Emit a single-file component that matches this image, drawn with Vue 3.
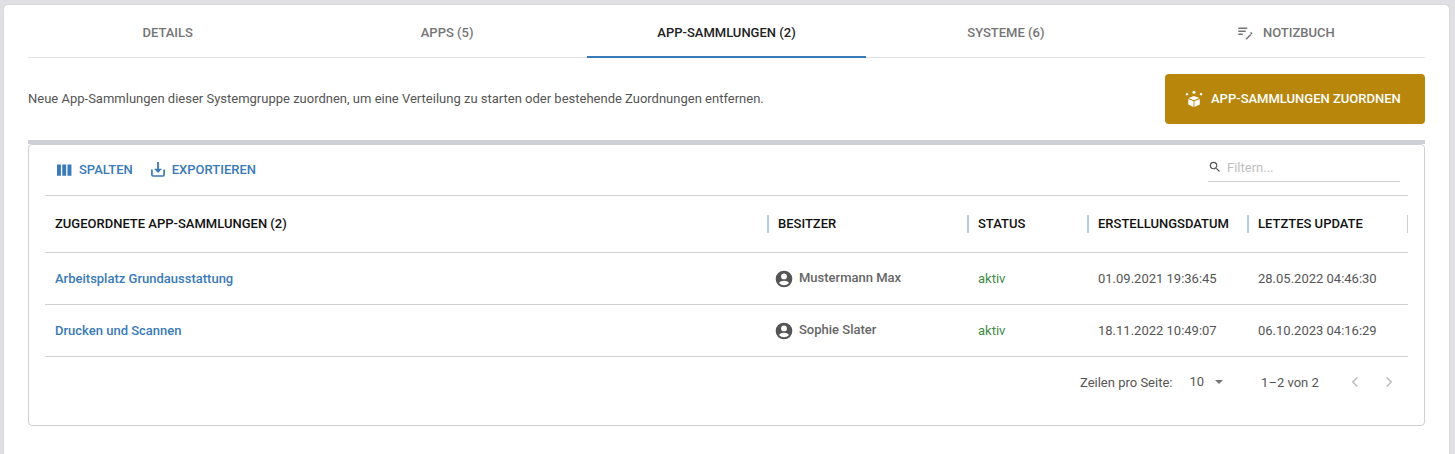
<script setup>
const tabs = [
  { label: 'DETAILS' },
  { label: 'APPS (5)' },
  { label: 'APP-SAMMLUNGEN (2)', active: true },
  { label: 'SYSTEME (6)' },
  { label: 'NOTIZBUCH', icon: true }
]
const rows = [
  { name: 'Arbeitsplatz Grundausstattung', owner: 'Mustermann Max', status: 'aktiv', created: '01.09.2021 19:36:45', updated: '28.05.2022 04:46:30' },
  { name: 'Drucken und Scannen', owner: 'Sophie Slater', status: 'aktiv', created: '18.11.2022 10:49:07', updated: '06.10.2023 04:16:29' }
]
</script>

<template>
  <div class="page">
    <main class="card">
      <nav class="tabs">
        <div v-for="t in tabs" :key="t.label" class="tab" :class="{ active: t.active }">
          <svg v-if="t.icon" class="tab-icon" viewBox="0 0 24 24"><path fill="currentColor" d="M3 10h10v2H3zm0-4h12v2H3zm0 8h6v2H3zm10 6.500V22h1.500l6-6-1.500-1.500zM21.700 13.300l-1-1a.8.8 0 0 0-1.100 0l-.9.9 2.100 2.100.9-.9a.8.8 0 0 0 0-1.100z"/></svg>
          <span>{{ t.label }}</span>
        </div>
      </nav>

      <section class="intro">
        <p>Neue App-Sammlungen dieser Systemgruppe zuordnen, um eine Verteilung zu starten oder bestehende Zuordnungen entfernen.</p>
        <button class="assign">
          <svg class="box" viewBox="0 0 20 20"><path fill="#fff" d="M10 6.600l6 2.400-6 2.400L4 9zM3.600 10l5.900 2.400v6.400l-5.900-2.600zM16.400 10l-5.900 2.400v6.400l5.900-2.600z"/><circle fill="#fff" cx="10" cy="2.600" r="1.700"/><circle fill="#fff" cx="2.200" cy="4.600" r="1.300"/><circle fill="#fff" cx="17.800" cy="4.600" r="1.300"/></svg>
          <span>APP-SAMMLUNGEN ZUORDNEN</span>
        </button>
      </section>

      <div class="band"></div>
      <section class="panel">
        <div class="toolbar">
          <div class="actions">
            <span class="action">
              <svg class="ic" viewBox="0 0 16 12"><path fill="currentColor" d="M0 0h4.200v12H0zM5.600 0h4.200v12H5.600zM11.200 0H15.400v12h-4.200z"/></svg>
              SPALTEN
            </span>
            <span class="action">
              <svg class="ic ic2" viewBox="0 0 14 15"><path fill="none" stroke="currentColor" stroke-width="1.700" d="M.9 7.500v5.300c0 .7.500 1.200 1.200 1.200h9.800c.7 0 1.200-.5 1.200-1.200V7.500"/><path fill="currentColor" d="M6.100 0h1.800v6.800H11l-4 4.200-4-4.200h3.100z"/></svg>
              EXPORTIEREN
            </span>
          </div>
          <label class="filter">
            <svg class="search" viewBox="0 0 24 24"><path fill="#555" d="M15.500 14h-.79l-.28-.27A6.471 6.471 0 0 0 16 9.500 6.500 6.500 0 1 0 9.500 16c1.610 0 3.090-.59 4.230-1.570l.27.28v.79l5 4.990L20.490 19l-4.990-5zm-6 0C7.010 14 5 11.990 5 9.500S7.010 5 9.500 5 14 7.010 14 9.500 11.990 14 9.500 14z"/></svg>
            <span>Filtern...</span>
          </label>
        </div>

        <div class="grid head">
          <div class="th first">ZUGEORDNETE APP-SAMMLUNGEN (2)</div>
          <div class="th">BESITZER</div>
          <div class="th">STATUS</div>
          <div class="th">ERSTELLUNGSDATUM</div>
          <div class="th last">LETZTES UPDATE</div>
        </div>
        <div v-for="r in rows" :key="r.name" class="grid row">
          <a class="name">{{ r.name }}</a>
          <div class="owner">
            <svg class="avatar" viewBox="0 0 24 24"><path fill="#555" d="M12 2a10 10 0 1 0 0 20 10 10 0 0 0 0-20zm0 3.400a3.500 3.500 0 1 1 0 7 3.500 3.500 0 0 1 0-7zm0 14.200a7.700 7.700 0 0 1-6-2.900c.9-1.700 3.700-2.700 6-2.700s5.100 1 6 2.700a7.700 7.700 0 0 1-6 2.900z"/></svg>
            <span>{{ r.owner }}</span>
          </div>
          <div class="status">{{ r.status }}</div>
          <div class="date">{{ r.created }}</div>
          <div class="date">{{ r.updated }}</div>
        </div>

        <footer class="pager">
          <span>Zeilen pro Seite:</span>
          <span class="size">10</span>
          <i class="caret"></i>
          <span class="range">1–2 von 2</span>
          <svg class="chev" viewBox="0 0 24 24"><path fill="none" stroke="#bdbdbd" stroke-width="2" d="M15 6l-6 6 6 6"/></svg>
          <svg class="chev next" viewBox="0 0 24 24"><path fill="none" stroke="#bdbdbd" stroke-width="2" d="M9 6l6 6-6 6"/></svg>
        </footer>
      </section>
    </main>
  </div>
</template>

<style>
html, body { margin: 0; background: #dfdfe4; }
</style>

<style scoped>
.page {
  box-sizing: border-box;
  height: 454px;
  padding: 5px 6px 0 4px;
  overflow: hidden;
  font-family: Roboto, "Liberation Sans", sans-serif;
  color: #555;
}
.card {
  box-sizing: border-box;
  height: 449px;
  padding: 0 24px;
  background: #fff;
  border-radius: 4px 4px 0 0;
  box-shadow: 0 0 1px rgba(0, 0, 0, 0.25);
}
.tabs {
  display: grid;
  grid-template-columns: repeat(5, 1fr);
  height: 53px;
  box-sizing: border-box;
  border-bottom: 1px solid #e2e2e6;
}
.tab {
  display: flex;
  align-items: center;
  justify-content: center;
  gap: 9px;
  height: 53px;
  box-sizing: border-box;
  padding-top: 1px;
  font-size: 13px;
  font-weight: 500;
  color: #757575;
}
.tab.active {
  color: #222;
  box-shadow: inset 0 -2px 0 #3a7ab8;
}
.tab-icon { width: 18px; height: 18px; }
.intro {
  display: flex;
  justify-content: space-between;
  align-items: center;
  height: 50px;
  margin-top: 16px;
}
.intro p {
  margin: 0 0 2px;
  font-size: 13px;
  color: #555;
}
.assign {
  display: flex;
  align-items: center;
  gap: 8px;
  width: 260px;
  height: 50px;
  padding: 0 0 0 20px;
  border: 0;
  border-radius: 4px;
  background: #b8860b;
  color: #fff;
  font: 500 13px Roboto, sans-serif;
}
.assign span { margin-bottom: 2px; }
.box { width: 18px; height: 18px; }
.band {
  height: 4px;
  margin-top: 16px;
  background: #cdd0d6;
}
.panel {
  box-sizing: border-box;
  height: 282px;
  padding: 0 16px;
  border: 1px solid #cfcfd4;
  border-radius: 4px;
}
.toolbar {
  display: flex;
  justify-content: space-between;
  box-sizing: border-box;
  height: 51px;
  border-bottom: 1px solid #cfd0d4;
}
.actions {
  display: flex;
  align-items: center;
  gap: 18px;
  padding: 0 0 1px 12px;
}
.action {
  display: flex;
  align-items: center;
  gap: 7px;
  font-size: 13px;
  font-weight: 500;
  color: #3a7ab8;
}
.ic { width: 15px; height: 12px; }
.ic2 { width: 14px; height: 15px; }
.filter {
  display: flex;
  align-items: center;
  gap: 5px;
  box-sizing: border-box;
  width: 192px;
  height: 33px;
  margin: 4px 8px 0 0;
  padding-top: 4px;
  border-bottom: 1px solid #cfd0d4;
  font-size: 13px;
  color: #bdbdbd;
}
.search { width: 14px; height: 14px; }
.grid {
  display: grid;
  grid-template-columns: 722px 200px 120px 160px 161px;
  align-items: center;
  box-sizing: border-box;
}
.head { height: 57px; border-bottom: 1px solid #cfd0d4; font-size: 13px; font-weight: 500; color: #111; }
.th { box-sizing: border-box; border-left: 2px solid #b0cbe2; padding-left: 9px; height: 18px; line-height: 18px; white-space: nowrap; }
.th.first { border-left: 0; padding-left: 10px; }
.th.last { border-right: 1px solid #cfd0d4; }
.row { height: 52px; border-bottom: 1px solid #cfd0d4; font-size: 13px; }
.name { padding-left: 10px; color: #3a7ab8; font-weight: 500; }
.owner { display: flex; align-items: center; gap: 5px; padding-left: 7px; font-weight: 500; color: #666; }
.owner span { margin-bottom: 2px; }
.avatar { width: 20px; height: 20px; }
.status { padding-left: 11px; color: #418d45; }
.date { padding-left: 11px; }
.pager {
  display: flex;
  align-items: center;
  height: 52px;
  padding: 0 0 2px 1035px;
  box-sizing: border-box;
  font-size: 13px;
  white-space: nowrap;
}
.size { margin: 0 0 2px 17px; }
.caret {
  width: 0;
  height: 0;
  margin-left: 11px;
  border: 4px solid transparent;
  border-top-color: #757575;
  border-bottom: 0;
}
.range { margin-left: 38px; }
.chev { width: 18px; height: 18px; margin-left: 27px; }
.chev.next { margin-left: 16px; }
</style>
